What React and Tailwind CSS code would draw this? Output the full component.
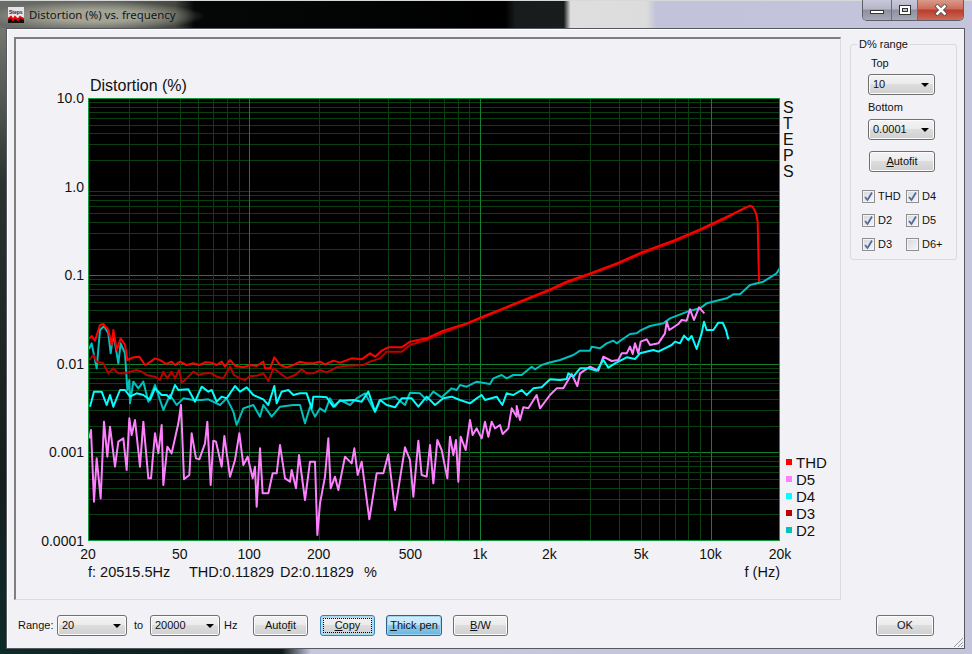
import React from "react";

// plot area in screen pixels: x 88-780, y 98-541
const PLOT_W = 692;
const PLOT_H = 443;
const fx = (f) => (Math.log10(f / 20) / 3) * PLOT_W;
const dy = (v) => (1 - Math.log10(v)) * (PLOT_H / 5);

const vLines = [];
[10, 100, 1000, 10000].forEach((d) => {
  for (let m = 1; m < 10; m++) {
    const f = d * m;
    if (f > 20 && f < 20000) vLines.push({ x: Math.round(fx(f)), major: f === 100 || f === 1000 || f === 10000 });
  }
});
const hLines = [];
[1, 0.1, 0.01, 0.001, 0.0001].forEach((d) => {
  for (let m = 1; m < 10; m++) {
    const v = d * m;
    if (m > 1 || d < 1) hLines.push({ y: Math.round(dy(v)), major: m === 1 });
  }
});

// traced from 3x crops, each with its own origin
const z = (ox, oy, pts) => pts.map(([x, y]) => `${ox + x / 3},${oy + y / 3}`);
const a = (pts) => z(80, 310, pts);
const b = (pts) => z(320, 310, pts);
const c = (pts) => z(550, 200, pts);

const thd = [
  ...a([[5,95],[28,85],[35,78],[45,92],[60,45],[70,42],[85,60],[95,105],[100,60],[110,120],[122,85],[135,105],[142,150],[160,142],[178,140],[195,165],[212,155],[225,145],[240,150],[258,162],[275,155],[285,165],[300,155],[320,165],[340,160],[358,165],[375,157],[395,158],[410,165],[425,155],[435,170],[450,150],[465,167],[490,172],[510,165],[530,168],[550,155],[555,175],[570,175],[583,142],[600,165],[620,172],[640,165],[660,155],[680,160],[700,160],[720,155]]),
  ...b([[15,163],[40,152],[60,158],[95,145],[125,148],[150,130],[165,140],[185,122],[205,112],[245,112],[270,95],[320,85],[370,62],[440,40],[500,15],[550,-5]]),
  ...c([[0,268],[50,245],[120,220],[200,190],[280,155],[370,122],[450,88],[475,76],[525,53],[600,17],[608,20],[618,40],[623,65],[625,155],[627,245]]),
];
const d3 = [
  ...a([[28,150],[40,135],[50,155],[70,160],[85,190],[100,175],[115,190],[135,190],[150,185],[170,180],[185,185],[200,195],[225,200],[240,210],[250,185],[262,205],[275,185],[285,205],[297,180],[305,218],[320,205],[340,185],[355,195],[375,190],[395,190],[410,200],[430,205],[450,170],[462,195],[480,205],[495,210],[510,198],[530,197],[550,190],[565,213],[580,175],[595,185],[620,205],[645,195],[665,178],[680,190],[700,190],[720,180]]),
  ...b([[20,187],[50,172],[70,168],[130,165],[150,155],[180,145],[200,125],[245,125],[270,105],[320,90],[370,68],[440,42],[500,18],[550,-3]]),
  ...c([[0,272],[50,249],[120,224],[200,194],[280,159],[370,126],[450,92],[475,80],[525,57],[590,20]]),
];
const d4 = [
  ...a([[30,290],[42,245],[65,245],[80,285],[90,255],[100,290],[120,240],[135,240],[150,260],[170,250],[190,255],[210,270],[225,235],[245,255],[260,255],[270,265],[285,225],[295,240],[325,238],[345,275],[365,230],[385,245],[395,240],[410,275],[425,260],[440,265],[465,228],[480,245],[500,232],[520,255],[550,268],[565,285],[583,228],[590,280],[605,245],[625,240],[640,255],[660,250],[680,250],[695,295],[700,260],[720,260]]),
  ...b([[20,262],[40,290],[60,272],[100,270],[125,275],[145,245],[165,305],[180,270],[200,285],[225,292],[245,265],[275,265],[295,290],[320,260],[345,285],[370,265],[395,260],[420,270],[450,280],[470,265],[485,255],[495,270],[530,260],[547,285],[560,250],[580,255],[605,240],[620,255],[640,235],[665,232],[690,208],[720,210]]),
  ...c([[50,537],[55,520],[70,530],[90,505],[115,505],[140,512],[160,480],[175,503],[195,490],[230,472],[255,477],[270,460],[310,450],[325,455],[365,435],[375,425],[390,430],[402,407],[415,420],[425,408],[440,447],[455,400],[462,365],[470,390],[490,390],[505,368],[518,368],[528,390],[535,418]]),
];
const d2 = [
  ...a([[5,110],[28,115],[35,100],[50,175],[60,60],[72,48],[85,70],[92,130],[100,70],[115,160],[122,100],[135,130],[142,240],[148,210],[150,280],[160,215],[175,235],[190,215],[205,275],[225,225],[250,300],[270,255],[290,285],[310,265],[340,270],[365,270],[385,268],[420,285],[440,265],[460,305],[470,345],[490,295],[520,285],[540,320],[550,285],[575,320],[600,290],[640,285],[660,285],[675,340],[690,290],[705,320],[720,295]]),
  ...b([[15,305],[30,265],[45,290],[60,270],[90,285],[110,265],[135,250],[165,305],[180,270],[205,265],[225,260],[255,285],[270,248],[300,250],[320,270],[340,245],[365,262],[395,235],[410,240],[420,225],[440,230],[470,215],[510,222],[520,205],[545,195],[560,205],[580,195],[605,195],[635,170],[645,178],[665,165],[680,160]]),
  ...c([[30,480],[70,465],[90,452],[120,452],[125,440],[150,445],[170,430],[190,422],[200,430],[240,402],[260,400],[270,392],[300,378],[340,370],[360,355],[420,332],[450,325],[470,310],[530,295],[550,283],[570,283],[600,255],[640,245],[680,220],[690,203]]),
];
const d5 = [
  ...a([[28,385],[33,360],[42,575],[50,445],[62,565],[72,335],[82,440],[90,350],[105,470],[115,395],[130,385],[140,480],[148,325],[155,375],[165,330],[180,470],[190,335],[205,505],[213,505],[225,370],[235,430],[245,345],[250,525],[262,410],[275,430],[295,340],[303,285],[312,508],[328,495],[335,370],[348,445],[358,448],[375,400],[382,335],[392,525],[400,392],[408,395],[425,470],[433,378],[450,500],[465,450],[478,370],[490,465],[503,440],[518,505],[525,470],[530,590],[540,415],[548,550],[565,550],[578,490],[590,490],[600,405],[615,505],[630,515],[635,480],[648,535],[657,435],[675,570],[690,455],[705,455],[712,675],[720,580]]),
  ...b([[15,500],[25,385],[32,535],[45,500],[55,540],[75,440],[95,460],[103,415],[113,495],[125,455],[148,628],[170,490],[190,490],[205,433],[225,600],[255,412],[270,450],[280,560],[295,392],[305,495],[320,500],[330,405],[340,520],[352,390],[365,420],[382,505],[390,380],[400,435],[408,390],[415,515],[422,380],[437,420],[450,330],[458,375],[470,355],[485,385],[495,335],[505,380],[515,335],[525,355],[540,345],[548,372],[565,355],[575,295],[590,320],[590,288],[600,330],[610,292],[625,295],[650,255],[660,295],[690,255]]),
  ...c([[20,565],[40,565],[65,522],[82,558],[90,520],[120,500],[145,512],[160,470],[185,483],[205,480],[215,460],[230,460],[240,440],[248,462],[255,430],[265,460],[272,425],[290,418],[300,435],[325,430],[345,400],[350,365],[358,390],[385,372],[395,360],[410,362],[420,328],[432,360],[447,322],[463,340]]),
];

const curves = [
  { pts: d2, color: "#00c0c0" },
  { pts: d3, color: "#c00000" },
  { pts: d5, color: "#ff80ff" },
  { pts: d4, color: "#00ffff" },
  { pts: thd, color: "#ff0000" },
];

const xTicks = [
  ["20", 20],
  ["50", 50],
  ["100", 100],
  ["200", 200],
  ["500", 500],
  ["1k", 1000],
  ["2k", 2000],
  ["5k", 5000],
  ["10k", 10000],
  ["20k", 20000],
];

const btnBase =
  "flex items-center justify-center rounded-[3px] border text-[11px] text-[#111] shadow-[inset_0_0_0_1px_#fbfbfb]";
const btnGrey = "border-[#707070] bg-[linear-gradient(180deg,#f3f3f3_0,#ebebeb_48%,#dddddd_50%,#cfcfcf_100%)]";

const Combo = ({ value, className }) => (
  <div className={`${btnBase} ${btnGrey} h-[21px] !justify-between pl-[4px] pr-[5px] ${className}`}>
    <span>{value}</span>
    <span className="h-0 w-0 border-x-[4px] border-t-[4px] border-x-transparent border-t-black" />
  </div>
);

const Check = ({ label, checked = true, className = "" }) => (
  <div className={`flex h-[13px] items-center gap-[3px] text-[11px] text-[#111] ${className}`}>
    <span className="flex h-[13px] w-[13px] items-center justify-center border border-[#8e8f8f] bg-[linear-gradient(135deg,#d8d8dc,#f6f6f8)] shadow-[inset_0_0_0_1px_#f4f4f4]">
      {checked && (
        <svg width="11" height="11" viewBox="0 0 11 11">
          <path d="M2 6 L4.5 9 L9 1.5" fill="none" stroke="#4f6aa3" strokeWidth="1.8" />
        </svg>
      )}
    </span>
    {label}
  </div>
);

const Legend = ({ color, label }) => (
  <div className="flex h-[17px] items-center gap-[4px] text-[15px] leading-[17px]">
    <span className={`mb-[2px] h-[6px] w-[6px] ${color}`} />
    {label}
  </div>
);

export default function App() {
  return (
    <div className="flex h-[654px] w-[972px] flex-col overflow-hidden bg-[linear-gradient(90deg,#0d2c2a_0,#0c1a1a_29%,#c6c6de_32%,#c4c4dc_100%)] font-['Liberation_Sans',sans-serif] text-[#111]">
      {/* title bar */}
      <div className="relative flex h-[28px] shrink-0 items-center border-t border-[#d8d8d8] bg-[radial-gradient(ellipse_110px_15px_at_95px_15px,#a3a394_40%,transparent_100%),linear-gradient(90deg,#6a6c68_0,#5d615c_12%,#454740_18%,#050707_20%,#000_52%,#181b1b_53%,#1a1d1d_58%,#dedede_58.7%,#dcdcdc_66.5%,#c2c2da_67.5%,#c4c4dc_100%)] pl-[8px]">
        <svg width="16" height="16" viewBox="0 0 16 16" className="shrink-0">
          <rect width="16" height="16" fill="#e6e2ee" />
          <text x="1" y="7" fontSize="5" fontWeight="700" fill="#223" fontFamily="Liberation Sans">
            Steps
          </text>
          <rect y="11" width="16" height="5" fill="#111" />
          <path d="M0 12 L3 10 L5 13 L7 10 L10 13 L12 10 L16 12" stroke="#f00000" strokeWidth="2" fill="none" />
        </svg>
        <span className="ml-[5px] font-['Noto_Sans',sans-serif] text-[11.4px] text-[#10141a]">
          Distortion (%) vs. frequency
        </span>
        {/* caption buttons */}
        <div className="absolute right-[8px] top-[-1px] flex h-[21px] w-[102px] overflow-hidden rounded-b-[5px] border border-t-0 border-[#5d6068]">
          <div className="flex w-[29px] items-center justify-center border-r border-[#6a6c78] bg-[linear-gradient(180deg,#c8c8d8_0,#b5b5c8_45%,#8f909f_50%,#a6a8b4_100%)]">
            <span className="mt-[4px] h-[4px] w-[14px] border border-[#333] bg-white" />
          </div>
          <div className="flex w-[26px] items-center justify-center border-r border-[#6a6c78] bg-[linear-gradient(180deg,#c8c8d8_0,#b5b5c8_45%,#8f909f_50%,#a6a8b4_100%)]">
            <span className="flex h-[10px] w-[12px] items-center justify-center border border-[#333] bg-white">
              <span className="h-[4px] w-[6px] border border-[#333] bg-[#c0c0d0]" />
            </span>
          </div>
          <div className="flex flex-1 items-center justify-center bg-[linear-gradient(180deg,#d89a8c_0,#cf6a58_45%,#b83c2c_50%,#cc6a58_100%)]">
            <svg width="14" height="12" viewBox="0 0 14 12">
              <path d="M2 1 L12 11 M12 1 L2 11" stroke="#444" strokeWidth="4" />
              <path d="M2.5 1.5 L11.5 10.5 M11.5 1.5 L2.5 10.5" stroke="#fff" strokeWidth="2.5" />
            </svg>
          </div>
        </div>
      </div>

      <div className="flex min-h-0 flex-1">
        <div className="w-[6px] shrink-0 bg-[linear-gradient(180deg,#74766f_0,#2a3330_25%,#161e1e_70%,#0d2c2a_100%)]" />

        {/* client area */}
        <div className="relative flex h-[621px] w-[959px] shrink-0 flex-col border border-[#565860] bg-[#f2f2f6] pl-[7px] pt-[8px] shadow-[inset_1px_1px_0_#ffffff]">
          <div className="flex items-start">
            {/* chart panel */}
            <div className="flex h-[563px] w-[827px] shrink-0 flex-col border-b border-l-2 border-r border-t-2 border-b-[#dcdcdc] border-l-[#7f7f7f] border-r-[#dcdcdc] border-t-[#7f7f7f] pt-[38px]">
              <div className="ml-[74px] h-[21px] text-[16px] leading-[18px]">Distortion (%)</div>
              <div className="flex">
                <div className="-my-[8px] flex h-[459px] w-[72px] shrink-0 flex-col items-end justify-between pr-[4px] text-[14px] leading-[16px]">
                  <span>10.0</span>
                  <span>1.0</span>
                  <span>0.1</span>
                  <span>0.01</span>
                  <span>0.001</span>
                  <span>0.0001</span>
                </div>
                <svg
                  width={PLOT_W}
                  height={PLOT_H}
                  viewBox="88 98 692 443"
                  className="shrink-0 bg-black"
                >
                  {hLines.map((l) => (
                    <line
                      key={l.y}
                      x1="88"
                      x2="780"
                      y1={98 + l.y + 0.5}
                      y2={98 + l.y + 0.5}
                      stroke={l.major ? "#13832b" : "#0a3f12"}
                      shapeRendering="crispEdges"
                    />
                  ))}
                  {vLines.map((l) => (
                    <line
                      key={l.x}
                      x1={88 + l.x + 0.5}
                      x2={88 + l.x + 0.5}
                      y1="98"
                      y2="541"
                      stroke={l.major ? "#17802f" : "#0a3f12"}
                      shapeRendering="crispEdges"
                    />
                  ))}
                  {curves.map((cv) => (
                    <polyline
                      key={cv.color}
                      points={cv.pts.join(" ")}
                      fill="none"
                      stroke={cv.color}
                      strokeWidth="2"
                      strokeLinejoin="round"
                    />
                  ))}
                  <rect x="88.5" y="98.5" width="691" height="442" fill="none" stroke="#0f9a3e" shapeRendering="crispEdges" />
                </svg>
                <div className="ml-[3px] flex h-[443px] w-[50px] flex-col justify-between pt-[2px]">
                  <div className="flex flex-col text-[16px] leading-[16px]">
                    <span>S</span>
                    <span>T</span>
                    <span>E</span>
                    <span>P</span>
                    <span>S</span>
                  </div>
                  <div className="mb-[2px] ml-[3px] flex flex-col">
                    <Legend color="bg-[#ff0000]" label="THD" />
                    <Legend color="bg-[#ff80ff]" label="D5" />
                    <Legend color="bg-[#00ffff]" label="D4" />
                    <Legend color="bg-[#c00000]" label="D3" />
                    <Legend color="bg-[#00c0c0]" label="D2" />
                  </div>
                </div>
              </div>
              <div className="relative ml-[72px] mt-[5px] h-[16px] w-[692px] text-[14px] leading-[16px]">
                {xTicks.map(([label, f]) => (
                  <span key={label} className="absolute top-0 -translate-x-1/2" style={{ left: fx(f) }}>
                    {label}
                  </span>
                ))}
              </div>
              <div className="ml-[72px] mt-[2px] flex h-[17px] w-[692px] text-[14.5px] leading-[17px]">
                <span className="w-[101px]">f: 20515.5Hz</span>
                <span className="w-[91px]">THD:0.11829</span>
                <span className="w-[84px]">D2:0.11829</span>
                <span>%</span>
                <span className="ml-auto">f (Hz)</span>
              </div>
            </div>

            {/* D% range group */}
            <div className="relative ml-[9px] mt-[7px] flex h-[216px] w-[107px] flex-col rounded-[3px] border border-[#d8d9dc] pl-[17px] pt-[12px] text-[11px]">
              <span className="absolute left-[6px] top-[-7px] bg-[#f2f2f6] px-[2px] leading-[13px]">D% range</span>
              <span className="ml-[3px] leading-[13px]">Top</span>
              <Combo value="10" className="mt-[4px] w-[67px]" />
              <span className="mt-[6px] leading-[13px]">Bottom</span>
              <Combo value="0.0001" className="mt-[5px] w-[67px]" />
              <div className={`${btnBase} ${btnGrey} ml-[1px] mt-[11px] h-[21px] w-[66px]`}>
                <span>
                  <u>A</u>utofit
                </span>
              </div>
              <div className="-ml-[6px] mt-[18px] grid grid-cols-[44px_auto] gap-y-[11px]">
                <Check label="THD" />
                <Check label="D4" />
                <Check label="D2" />
                <Check label="D5" />
                <Check label="D3" />
                <Check label="D6+" checked={false} />
              </div>
            </div>
          </div>

          {/* bottom controls */}
          <div className="ml-[3px] mt-[15px] flex h-[21px] items-center text-[11px]">
            <span className="w-[40px] pl-[1px]">Range:</span>
            <Combo value="20" className="w-[70px]" />
            <span className="ml-[7px] w-[16px]">to</span>
            <Combo value="20000" className="w-[70px]" />
            <span className="ml-[4px] w-[29px]">Hz</span>
            <div className={`${btnBase} ${btnGrey} h-[21px] w-[55px]`}>
              <span>
                Auto<u>f</u>it
              </span>
            </div>
            <div className={`${btnBase} ml-[12px] h-[21px] w-[55px] border-[#3c7fb1] bg-[linear-gradient(180deg,#f3f3f3_0,#ebebeb_48%,#dddddd_50%,#cfcfcf_100%)] !shadow-[inset_0_0_0_2px_#a8dcf4]`}>
              <span className="flex h-[15px] w-[49px] items-center justify-center border border-dotted border-black">
                <span>
                  <u>C</u>opy
                </span>
              </span>
            </div>
            <div className={`${btnBase} ml-[11px] h-[21px] w-[56px] border-[#2c628b] bg-[linear-gradient(180deg,#d6eefb_0,#bce3f8_48%,#8ccbee_50%,#6ab4de_100%)] !shadow-[inset_0_0_0_1px_#9fd3ee]`}>
              <span>
                <u>T</u>hick pen
              </span>
            </div>
            <div className={`${btnBase} ${btnGrey} ml-[11px] h-[21px] w-[55px]`}>
              <span>
                <u>B</u>/W
              </span>
            </div>
            <div className={`${btnBase} ${btnGrey} ml-[368px] h-[21px] w-[58px]`}>OK</div>
          </div>

          <svg width="12" height="12" viewBox="0 0 12 12" className="absolute bottom-0 right-0">
            <path d="M11 2 L2 11 M11 6 L6 11 M11 9 L9 11" stroke="#9a9aa2" strokeWidth="1" />
          </svg>
        </div>

        <div className="flex-1" />
      </div>
    </div>
  );
}
